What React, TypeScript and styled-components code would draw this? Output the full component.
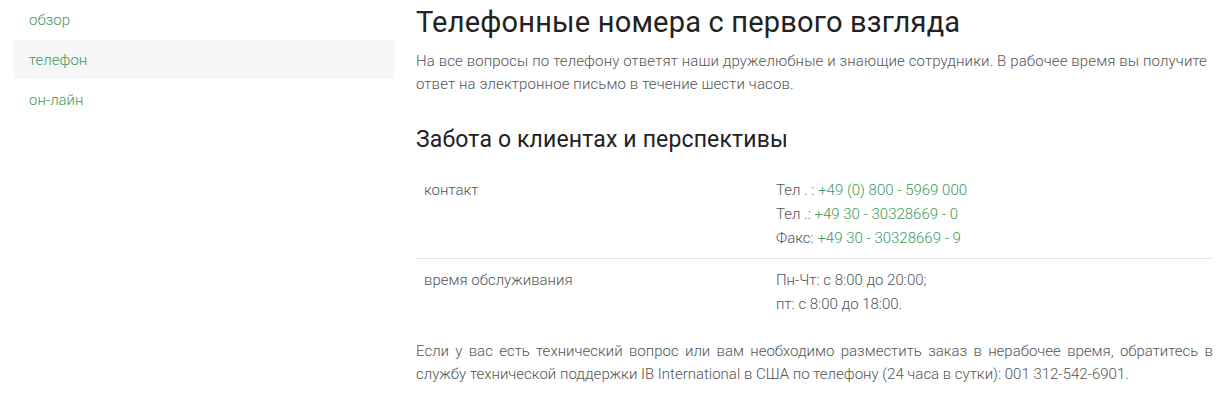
import styled, { createGlobalStyle } from 'styled-components';

const GlobalStyle = createGlobalStyle`
  body {
    margin: 0;
    background: #ffffff;
    font-family: Roboto, "Liberation Sans", sans-serif;
  }
`;

const navItems = [
  { label: 'обзор', active: false },
  { label: 'телефон', active: true },
  { label: 'он-лайн', active: false },
];

export default function App() {
  return (
    <>
      <GlobalStyle />
      <Page>
        <Sidebar>
          {navItems.map((item) => (
            <NavItem key={item.label} $active={item.active}>
              {item.label}
            </NavItem>
          ))}
        </Sidebar>
        <Content>
          <Title>Телефонные номера с первого взгляда</Title>
          <Text>
            На все вопросы по телефону ответят наши дружелюбные и знающие сотрудники. В рабочее время вы получите
            ответ на электронное письмо в течение шести часов.
          </Text>
          <Subtitle>Забота о клиентах и перспективы</Subtitle>
          <Table>
            <Row>
              <Cell>контакт</Cell>
              <Cell>
                Тел . : <Phone>+49 (0) 800 - 5969 000</Phone>
                <br />
                Тел .: <Phone>+49 30 - 30328669 - 0</Phone>
                <br />
                Факс: <Phone>+49 30 - 30328669 - 9</Phone>
              </Cell>
            </Row>
            <Row $last>
              <Cell>время обслуживания</Cell>
              <Cell>
                Пн-Чт: с 8:00 до 20:00;
                <br />
                пт: с 8:00 до 18:00.
              </Cell>
            </Row>
          </Table>
          <Note>
            Если у вас есть технический вопрос или вам необходимо разместить заказ в нерабочее время, обратитесь в
            службу технической поддержки IB International в США по телефону (24 часа в сутки): 001 312-542-6901.
          </Note>
        </Content>
      </Page>
    </>
  );
}

const Page = styled.div`
  display: flex;
  gap: 22px;
  padding-left: 14px;
  width: 1199px;
`;

const Sidebar = styled.nav`
  width: 380px;
  flex-shrink: 0;
  display: flex;
  flex-direction: column;
`;

const NavItem = styled.a<{ $active?: boolean }>`
  display: flex;
  align-items: center;
  height: 39px;
  margin-bottom: 1px;
  padding-left: 15px;
  background: ${({ $active }) => ($active ? '#f6f6f6' : 'transparent')};
  font-size: 15px;
  font-weight: 300;
  color: #3c9a5c;
  cursor: pointer;
`;

const Content = styled.main`
  width: 797px;
  color: #555555;
`;

const Title = styled.h1`
  margin: 4px 0 0;
  font-size: 29px;
  line-height: 36px;
  font-weight: 400;
  letter-spacing: 0.2px;
  color: #222222;
`;

const Text = styled.p`
  margin: 10px 0 0;
  font-size: 15px;
  line-height: 23px;
  font-weight: 300;
  letter-spacing: 0.12px;
`;

const Subtitle = styled.h2`
  margin: 29px 0 0;
  font-size: 23px;
  line-height: 30px;
  font-weight: 400;
  letter-spacing: 0.15px;
  color: #222222;
`;

const Table = styled.div`
  margin-top: 14px;
`;

const Row = styled.div<{ $last?: boolean }>`
  display: grid;
  grid-template-columns: 352px 1fr;
  border-bottom: ${({ $last }) => ($last ? 'none' : '1px solid #e6e6e6')};
`;

const Cell = styled.div`
  padding: 9px 8px 8px;
  font-size: 15px;
  line-height: 24px;
  font-weight: 300;
`;

const Phone = styled.span`
  color: #3c9a5c;
`;

const Note = styled.p`
  margin: 16px 0 0;
  font-size: 15px;
  line-height: 23px;
  font-weight: 300;
  text-align: justify;
`;
